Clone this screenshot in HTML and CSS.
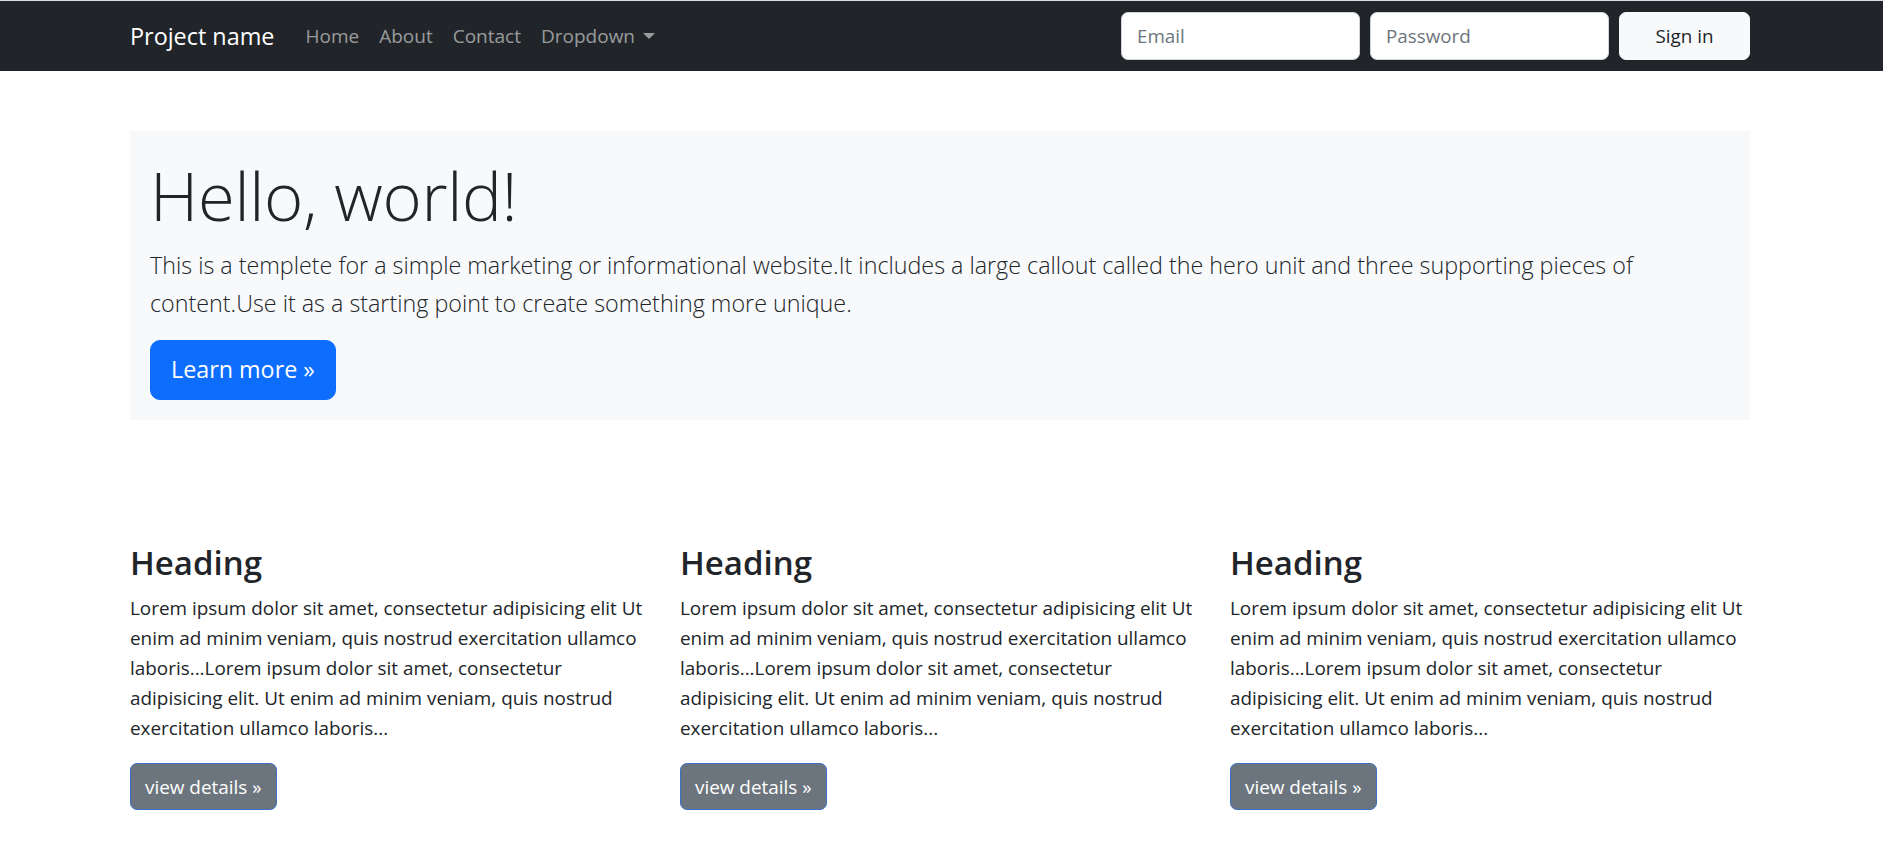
FILE: index.html
```html
<!DOCTYPE html>
<html lang="en">
<head>
<meta charset="utf-8">
<title>Project name</title>
<link rel="stylesheet" href="styles.css">
</head>
<body>
<nav class="navbar">
  <div class="container nav-inner">
    <a class="brand" href="#">Project name</a>
    <ul class="nav-links">
      <li><a href="#">Home</a></li>
      <li><a href="#">About</a></li>
      <li><a href="#">Contact</a></li>
      <li><a href="#" class="dropdown-toggle">Dropdown</a></li>
    </ul>
    <form class="signin">
      <input class="field" type="text" placeholder="Email">
      <input class="field" type="password" placeholder="Password">
      <button class="btn-light" type="button">Sign in</button>
    </form>
  </div>
</nav>

<main class="container">
  <section class="hero">
    <h1 class="hero-title">Hello, world!</h1>
    <p class="lead">This is a templete for a simple marketing or informational website.It includes a large callout called the hero unit and three supporting pieces of content.Use it as a starting point to create something more unique.</p>
    <a class="btn-primary" href="#">Learn more &raquo;</a>
  </section>

  <section class="columns">
    <div class="col">
      <h3 class="col-title">Heading</h3>
      <p class="col-text">Lorem ipsum dolor sit amet, consectetur adipisicing elit Ut enim ad minim veniam, quis nostrud exercitation ullamco laboris...Lorem ipsum dolor sit amet, consectetur adipisicing elit. Ut enim ad minim veniam, quis nostrud exercitation ullamco laboris...</p>
      <a class="btn-secondary" href="#">view details &raquo;</a>
    </div>
    <div class="col">
      <h3 class="col-title">Heading</h3>
      <p class="col-text">Lorem ipsum dolor sit amet, consectetur adipisicing elit Ut enim ad minim veniam, quis nostrud exercitation ullamco laboris...Lorem ipsum dolor sit amet, consectetur adipisicing elit. Ut enim ad minim veniam, quis nostrud exercitation ullamco laboris...</p>
      <a class="btn-secondary" href="#">view details &raquo;</a>
    </div>
    <div class="col">
      <h3 class="col-title">Heading</h3>
      <p class="col-text">Lorem ipsum dolor sit amet, consectetur adipisicing elit Ut enim ad minim veniam, quis nostrud exercitation ullamco laboris...Lorem ipsum dolor sit amet, consectetur adipisicing elit. Ut enim ad minim veniam, quis nostrud exercitation ullamco laboris...</p>
      <a class="btn-secondary" href="#">view details &raquo;</a>
    </div>
  </section>
</main>
</body>
</html>
```

FILE: styles.css
```css
* { box-sizing: border-box; }

html, body {
  margin: 0;
  padding: 0;
  background: #fff;
}

body {
  font-family: "Open Sans", "Noto Sans", "Liberation Sans", sans-serif;
  color: #212529;
  font-size: 18.9px;
  line-height: 30px;
  padding-right: 3px;
}

.container {
  width: 1620px;
  margin: 0 auto;
}

/* Navbar */
.navbar {
  background: #212529;
  border-top: 1px solid #dcdcdc;
  height: 71px;
  padding-right: 3px;
  margin-right: -3px;
}

.nav-inner {
  height: 70px;
  display: flex;
  align-items: center;
}

.brand {
  color: #fff;
  text-decoration: none;
  font-size: 23.4px;
  line-height: 36px;
  margin-right: 21px;
}

.nav-links {
  list-style: none;
  margin: 0;
  padding: 0;
  display: flex;
}

.nav-links a {
  display: block;
  color: rgba(255, 255, 255, 0.55);
  text-decoration: none;
  font-size: 19px;
  line-height: 30px;
  padding: 5px 10px;
}

.dropdown-toggle::after {
  content: "";
  display: inline-block;
  margin-left: 8px;
  vertical-align: 4px;
  border-top: 6px solid;
  border-left: 6px solid transparent;
  border-right: 6px solid transparent;
}

.signin {
  margin-left: auto;
  display: flex;
  gap: 10px;
}

.field {
  width: 239px;
  height: 48px;
  border: 1px solid #ced4da;
  border-radius: 7px;
  padding: 0 15px;
  font-family: inherit;
  font-size: 18.8px;
  color: #212529;
  background: #fff;
  outline: none;
}

.field::placeholder {
  color: #6c757d;
}

.btn-light {
  height: 48px;
  width: 131px;
  border: 1px solid #f8f9fa;
  border-radius: 7px;
  background: #f8f9fa;
  color: #212529;
  font-family: inherit;
  font-size: 18.8px;
  padding: 0;
}

/* Hero */
.hero {
  margin-top: 60px;
  background: #f8f9fa;
  padding: 22px 20px 20px 20px;
}

.hero-title {
  margin: 0 0 10px;
  font-size: 67px;
  font-weight: 300;
  line-height: 84px;
  letter-spacing: -0.3px;
}

.lead {
  margin: 0 0 18px;
  font-size: 23.3px;
  font-weight: 300;
  line-height: 37.5px;
}

.btn-primary {
  display: inline-block;
  background: #0d6efd;
  color: #fff;
  text-decoration: none;
  font-size: 23.3px;
  line-height: 37.5px;
  padding: 10px 20px;
  border: 1px solid #0d6efd;
  border-radius: 10px;
  height: 60px;
}

/* Columns */
.columns {
  margin-top: 121px;
  display: grid;
  grid-template-columns: repeat(3, 520px);
  column-gap: 30px;
}

.col-title {
  margin: 0 0 9px;
  font-size: 33px;
  font-weight: 600;
  line-height: 43px;
}

.col-text {
  margin: 0 0 20px;
  font-size: 18.9px;
  line-height: 30px;
}

.btn-secondary {
  display: inline-block;
  background: #6c757d;
  color: #fff;
  text-decoration: none;
  font-size: 18.9px;
  line-height: 30px;
  padding: 7.5px 14px;
  border: 1px solid #3d70c8;
  border-radius: 7px;
  height: 47px;
}
```
